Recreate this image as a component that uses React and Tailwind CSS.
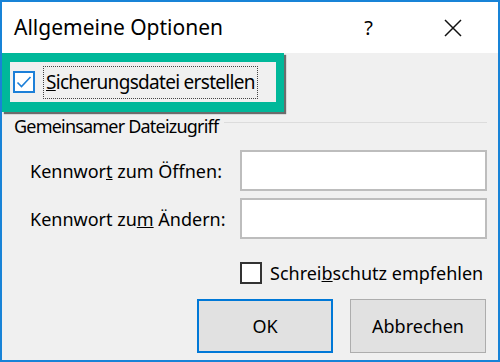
import React from 'react';

const font = { fontFamily: '"Segoe UI", "Noto Sans", "Open Sans", sans-serif' };

function CheckBox({ checked, accent }) {
  return (
    <span
      className={`flex h-[22px] w-[22px] shrink-0 items-center justify-center bg-white border-2 ${
        accent ? 'border-[#1c7fd8]' : 'border-[#333333]'
      }`}
    >
      {checked && (
        <svg width="18" height="18" viewBox="0 0 18 18" fill="none">
          <polyline points="2.5 9.5 6.5 13.5 15.5 4" stroke="#1c7fd8" strokeWidth="1.6" />
        </svg>
      )}
    </span>
  );
}

export default function App() {
  return (
    <div
      className="w-[500px] h-[362px] border-2 border-[#1883d7] flex flex-col bg-[#f0f0f0] text-black overflow-hidden"
      style={font}
    >
      {/* Title bar */}
      <div className="h-[51px] shrink-0 bg-white flex items-center pl-[12px]">
        <span className="text-[21px] leading-none">Allgemeine Optionen</span>
        <span className="ml-auto mr-[71px] text-[20px] leading-none">?</span>
        <svg className="mr-[36px]" width="18" height="18" viewBox="0 0 18 18">
          <path d="M1 1 L17 17 M17 1 L1 17" stroke="#111" strokeWidth="1.5" />
        </svg>
      </div>

      {/* Content */}
      <div className="flex-1 flex flex-col">
        {/* Highlighted checkbox */}
        <div className="w-[282px] h-[59px] border-x-8 border-t-[9px] border-b-[10px] border-[#00b89a] shadow-[2px_2px_1px_rgba(0,0,0,0.55)] flex items-center pl-[3px]">
          <CheckBox checked accent />
          <span className="ml-[8px] h-[33px] flex items-center px-[2px] border border-dotted border-[#444] text-[19px] tracking-[-0.7px] leading-none">
            <u>S</u>icherungsdatei erstellen
          </span>
        </div>

        {/* Group header */}
        <div className="mt-[2px] h-[24px] flex items-center pl-[12px] pr-[11px]">
          <span className="text-[18px] tracking-[-0.8px] leading-none">Gemeinsamer Dateizugriff</span>
          <span className="flex-1 ml-[6px] h-px bg-[#dcdcdc] -mt-[8px]" />
        </div>

        {/* Password rows */}
        <div className="mt-[12px] flex items-center pl-[28px] pr-[11px]">
          <span className="text-[18px] leading-none">
            Kennwor<u>t</u> zum Öffnen:
          </span>
          <div className="ml-auto w-[247px] h-[41px] bg-white border-2 border-[#bdbdbd]" />
        </div>
        <div className="mt-[7px] flex items-center pl-[28px] pr-[11px]">
          <span className="text-[18px] leading-none">
            Kennwort zu<u>m</u> Ändern:
          </span>
          <div className="ml-auto w-[247px] h-[41px] bg-white border-2 border-[#bdbdbd]" />
        </div>

        {/* Read-only recommendation */}
        <div className="mt-[23px] flex items-center pl-[238px]">
          <CheckBox />
          <span className="ml-[8px] text-[18px] leading-none">
            Schrei<u>b</u>schutz empfehlen
          </span>
        </div>

        {/* Buttons */}
        <div className="mt-[15px] flex pl-[195px] gap-[17px]">
          <button className="w-[136px] h-[54px] bg-[#e1e1e1] border-2 border-[#0078d7] text-[18px]">
            OK
          </button>
          <button className="w-[136px] h-[54px] bg-[#e1e1e1] border border-[#adadad] text-[18px]">
            Abbrechen
          </button>
        </div>
      </div>
    </div>
  );
}
